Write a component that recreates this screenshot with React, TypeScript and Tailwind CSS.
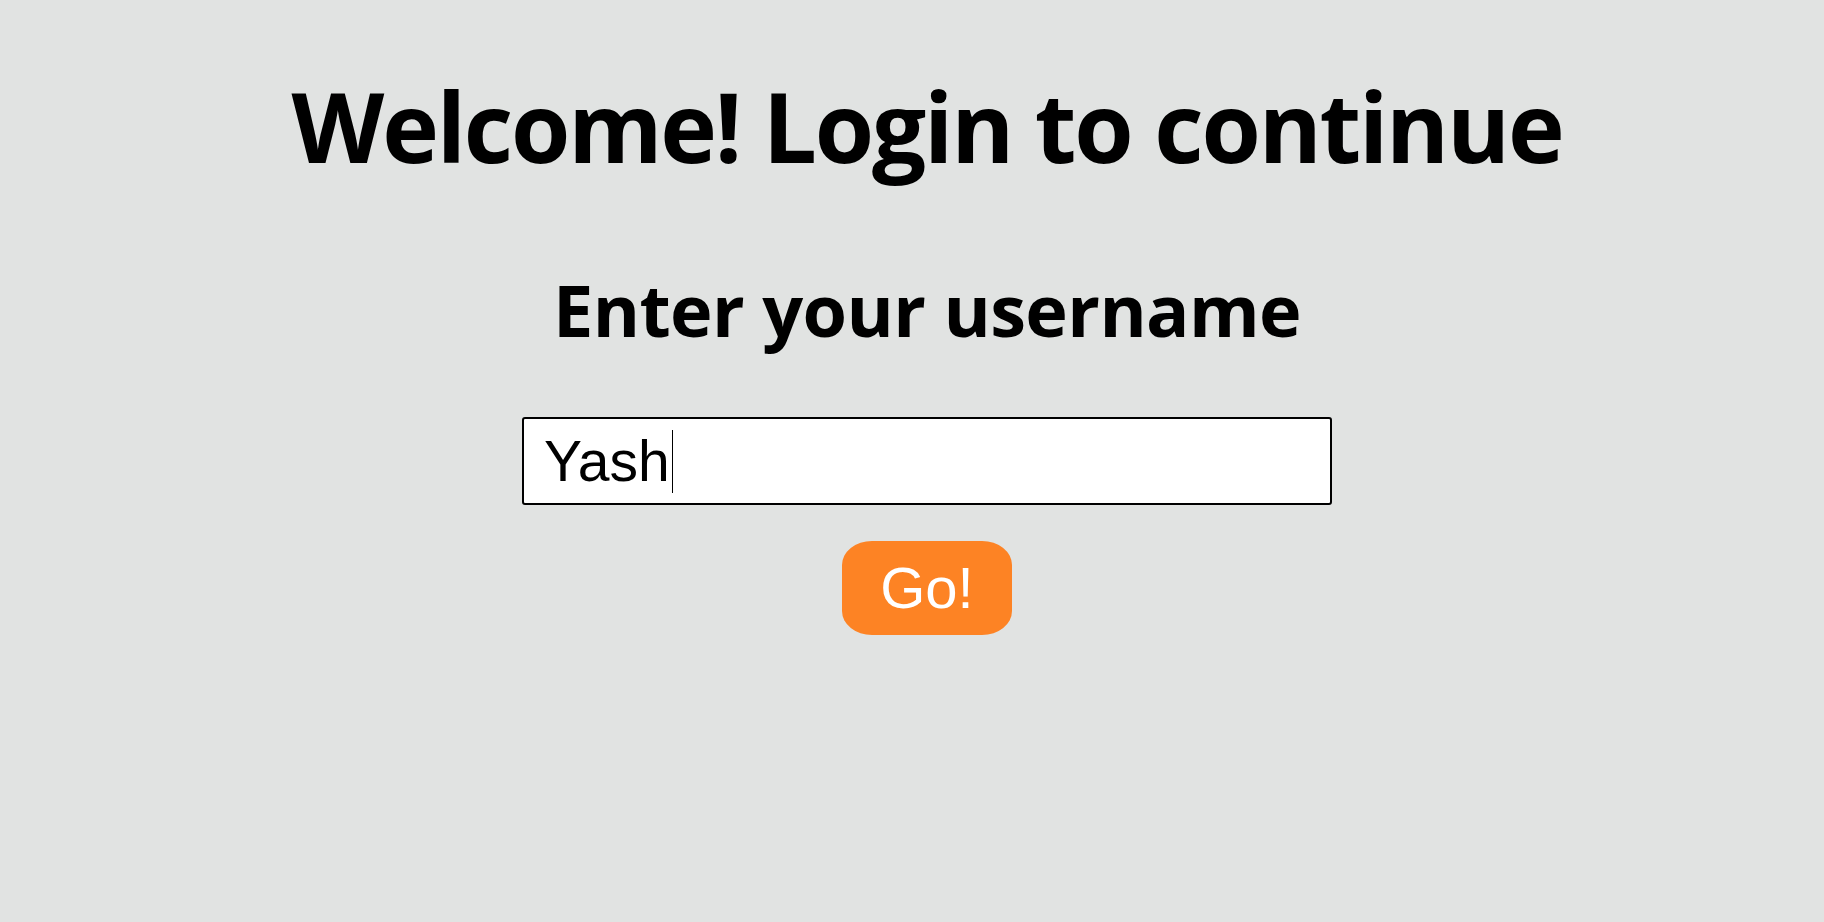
export default function App() {
  return (
    <div className="min-h-[922px] w-full bg-[#e1e3e2] pl-[30px]">
      <div className="flex flex-col items-center">
        {/* titulo */}
        <h1 className="mt-[78px] text-[96px] font-bold leading-none tracking-[-2.2px] text-black whitespace-nowrap [font-family:'Open_Sans','Noto_Sans',sans-serif]">
          Welcome! Login to continue
        </h1>
        <h2 className="mt-[99px] text-[72px] font-bold leading-none tracking-[-0.6px] text-black whitespace-nowrap [font-family:'Open_Sans','Noto_Sans',sans-serif]">
          Enter your username
        </h2>

        <div className="mt-[72px] flex h-[88px] w-[810px] items-center rounded-[3px] border-2 border-black bg-white pl-[20px]">
          <span className="text-[57px] leading-none text-black [font-family:'Liberation_Sans',Arial,sans-serif]">Yash</span>
          <span className="ml-[2px] h-[63px] w-px bg-black" />
        </div>

        <button className="mt-[36px] flex h-[94px] w-[170px] items-center justify-center rounded-[30px/24px] bg-[#fd8324] text-[58px] leading-none text-white [font-family:'Liberation_Sans',Arial,sans-serif]">
          Go!
        </button>
      </div>
    </div>
  )
}
